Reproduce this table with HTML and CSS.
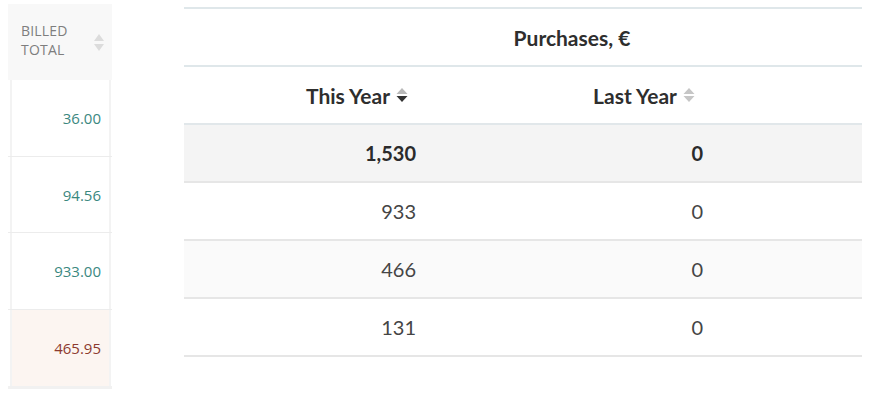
FILE: index.html
```html
<!DOCTYPE html>
<html>
<head>
<meta charset="utf-8">
<link rel="stylesheet" href="styles.css">
</head>
<body>
<div class="page">
  <div class="billed">
    <div class="billed-head">
      <span class="billed-title">BILLED<br>TOTAL</span>
      <svg class="sort sort-light" width="10" height="19" viewBox="0 0 10 19"><polygon points="0,8 5,1 10,8" fill="#dcdcdc"/><polygon points="0,11 10,11 5,18" fill="#dcdcdc"/></svg>
    </div>
    <div class="billed-row r1"><div class="billed-cell ok">36.00</div></div>
    <div class="billed-row r2"><div class="billed-cell ok">94.56</div></div>
    <div class="billed-row r3"><div class="billed-cell ok">933.00</div></div>
    <div class="billed-row r4"><div class="billed-cell due">465.95</div></div>
    <div class="billed-foot"></div>
  </div>

  <div class="purchases">
    <div class="p-title">Purchases, €</div>
    <div class="p-head c1">This Year <svg class="sort" width="12" height="16" viewBox="0 0 12 16"><polygon points="0.5,7 6,1 11.5,7" fill="#b9b9b9"/><polygon points="0.5,9 11.5,9 6,15" fill="#333"/></svg></div>
    <div class="p-head c2">Last Year <svg class="sort" width="12" height="16" viewBox="0 0 12 16"><polygon points="0.5,7 6,1 11.5,7" fill="#c6c6c6"/><polygon points="0.5,9 11.5,9 6,15" fill="#c6c6c6"/></svg></div>

    <div class="p-cell c1 total">1,530</div>
    <div class="p-cell c2 total">0</div>

    <div class="p-cell c1">933</div>
    <div class="p-cell c2">0</div>

    <div class="p-cell c1 alt">466</div>
    <div class="p-cell c2 alt">0</div>

    <div class="p-cell c1">131</div>
    <div class="p-cell c2">0</div>
  </div>
</div>
</body>
</html>
```

FILE: styles.css
```css
html, body {
  margin: 0;
  padding: 0;
  background: #ffffff;
}

.page {
  display: flex;
  align-items: flex-start;
  padding-left: 8px;
}

/* Left billed column */
.billed {
  width: 104px;
  margin-top: 4px;
  font-family: "Open Sans", "Liberation Sans", sans-serif;
}

.billed-head {
  height: 76px;
  background: #f8f8f8;
  display: flex;
  align-items: center;
  justify-content: space-between;
  padding: 0 8px 0 13px;
  box-sizing: border-box;
}

.billed-title {
  font-size: 14px;
  line-height: 19px;
  color: #7e7e7e;
  letter-spacing: 0.2px;
  margin-top: -4px;
}

.billed-row {
  border-bottom: 1px solid #ececec;
  box-sizing: border-box;
}

.billed-row.r1 { height: 77px; }
.billed-row.r2 { height: 76px; }
.billed-row.r3 { height: 77px; }
.billed-row.r4 { height: 76px; border-bottom: none; }

.billed-cell {
  height: 100%;
  margin: 0 1px 0 2px;
  border-left: 2px solid #f3f3f3;
  border-right: 2px solid #f3f3f3;
  display: flex;
  align-items: center;
  justify-content: flex-end;
  padding-right: 8px;
  font-size: 15px;
  box-sizing: border-box;
}

.billed-cell.ok { color: #3b887f; }

.billed-cell.due {
  color: #8c3a2f;
  background: #fcf5f1;
}

.billed-foot {
  height: 3px;
  background: #f1f1f1;
}

/* Right purchases table */
.purchases {
  margin-left: 72px;
  margin-top: 7px;
  width: 678px;
  display: grid;
  grid-template-columns: 346px 332px;
  border-top: 2px solid #dfe7ea;
  font-family: "Lato", "Liberation Sans", sans-serif;
}

.p-title {
  grid-column: 1 / 3;
  height: 58px;
  border-bottom: 2px solid #dfe7ea;
  box-sizing: border-box;
  display: flex;
  align-items: center;
  justify-content: center;
  padding-left: 98px;
  font-weight: 700;
  font-size: 21px;
  color: #2e2e2e;
}

.p-head {
  height: 58px;
  border-bottom: 2px solid #e1e7ea;
  box-sizing: border-box;
  display: flex;
  align-items: center;
  justify-content: center;
  gap: 6px;
  font-weight: 700;
  font-size: 21px;
  color: #2e2e2e;
}

.p-head.c2 { padding-right: 104px; }

.sort { display: block; }

.p-cell {
  height: 58px;
  border-bottom: 2px solid #e6e6e6;
  box-sizing: border-box;
  display: flex;
  align-items: center;
  justify-content: flex-end;
  font-size: 20px;
  color: #454545;
}

.p-cell.c1 { padding-right: 114px; }
.p-cell.c2 { padding-right: 159px; }

.p-cell.total {
  background: #f4f4f4;
  font-weight: 700;
  color: #2b2b2b;
}

.p-cell.alt { background: #fafafa; }
```
